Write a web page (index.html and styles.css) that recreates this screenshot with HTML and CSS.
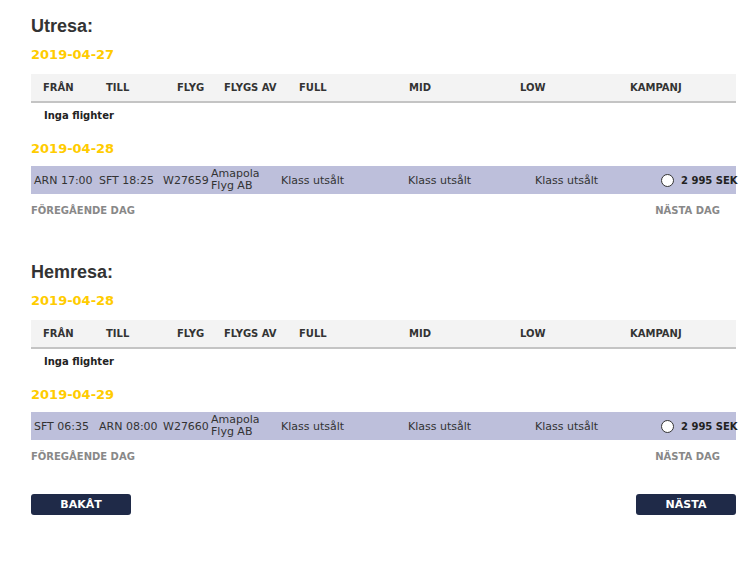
FILE: index.html
```html
<!DOCTYPE html>
<html lang="sv">
<head>
    <meta charset="UTF-8">
    <title>Välj flyg</title>
    <link rel="stylesheet" href="styles.css">
</head>
<body>
    <div class="booking">
        <div class="trip">
            <h2>Utresa:</h2>
            <div class="date">2019-04-27</div>
            <div class="head-row">
                <span>FRÅN</span><span>TILL</span><span>FLYG</span><span>FLYGS AV</span>
                <span>FULL</span><span>MID</span><span>LOW</span><span>KAMPANJ</span>
            </div>
            <div class="empty-row">Inga flighter</div>
            <div class="date date-next">2019-04-28</div>
            <div class="flight-row">
                <span>ARN 17:00</span><span>SFT 18:25</span><span>W27659</span>
                <span class="carrier">Amapola<br>Flyg AB</span>
                <span>Klass utsålt</span><span>Klass utsålt</span><span>Klass utsålt</span>
                <span class="fare"><i class="radio"></i><b>2 995 SEK</b></span>
            </div>
            <div class="day-nav">
                <a href="#">FÖREGÅENDE DAG</a>
                <a href="#">NÄSTA DAG</a>
            </div>
        </div>

        <div class="trip trip-return">
            <h2>Hemresa:</h2>
            <div class="date">2019-04-28</div>
            <div class="head-row">
                <span>FRÅN</span><span>TILL</span><span>FLYG</span><span>FLYGS AV</span>
                <span>FULL</span><span>MID</span><span>LOW</span><span>KAMPANJ</span>
            </div>
            <div class="empty-row">Inga flighter</div>
            <div class="date date-next">2019-04-29</div>
            <div class="flight-row">
                <span>SFT 06:35</span><span>ARN 08:00</span><span>W27660</span>
                <span class="carrier">Amapola<br>Flyg AB</span>
                <span>Klass utsålt</span><span>Klass utsålt</span><span>Klass utsålt</span>
                <span class="fare"><i class="radio"></i><b>2 995 SEK</b></span>
            </div>
            <div class="day-nav">
                <a href="#">FÖREGÅENDE DAG</a>
                <a href="#">NÄSTA DAG</a>
            </div>
        </div>

        <div class="steps">
            <button>BAKÅT</button>
            <button>NÄSTA</button>
        </div>
    </div>
</body>
</html>
```

FILE: styles.css
```css
body {
    margin: 0;
    padding: 0;
    background: #ffffff;
    font-family: 'DejaVu Sans', Verdana, sans-serif;
    color: #333;
}
.booking {
    width: 705px;
    padding: 15px 0 0 31px;
}
.trip h2 {
    margin: 0;
    font-family: 'Liberation Sans', Arial, sans-serif;
    font-size: 18px;
    line-height: 22px;
    font-weight: bold;
    color: #333;
}
.trip-return {
    margin-top: 43px;
}
.date {
    margin-top: 9px;
    font-size: 13px;
    line-height: 17px;
    font-weight: bold;
    color: #ffcc00;
}
.date.date-next {
    margin-top: 11px;
}
.head-row {
    margin-top: 11px;
    height: 27px;
    padding-left: 12px;
    display: grid;
    grid-template-columns: 63px 71px 47px 75px 110px 111px 110px 1fr;
    align-items: center;
    background: #f3f3f3;
    border-bottom: 2px solid #c4c4c4;
    font-size: 10px;
    font-weight: bold;
    color: #333;
}
.empty-row {
    height: 26px;
    line-height: 26px;
    padding-left: 13px;
    font-size: 10px;
    font-weight: bold;
    color: #222;
}
.flight-row {
    margin-top: 9px;
    height: 28px;
    padding-left: 3px;
    display: grid;
    grid-template-columns: 65px 64px 48px 70px 127px 127px 126px 1fr;
    align-items: center;
    background: #bdbfdb;
    font-size: 11px;
    color: #333;
}
.flight-row .carrier {
    line-height: 12px;
}
.fare {
    display: flex;
    align-items: center;
    gap: 7px;
    white-space: nowrap;
}
.fare b {
    font-size: 10px;
    color: #222;
}
.radio {
    flex-shrink: 0;
    width: 11px;
    height: 11px;
    border: 1px solid #333;
    border-radius: 50%;
    background: #fff;
}
.day-nav {
    margin-top: 10px;
    display: flex;
    justify-content: space-between;
    padding-right: 16px;
    line-height: 14px;
}
.day-nav a {
    font-size: 10px;
    font-weight: bold;
    color: #888;
    text-decoration: none;
}
.steps {
    margin-top: 30px;
    display: flex;
    justify-content: space-between;
}
.steps button {
    width: 100px;
    height: 21px;
    padding: 0;
    border: none;
    border-radius: 3px;
    background: #1f2a48;
    color: #fff;
    font-family: 'DejaVu Sans', Verdana, sans-serif;
    font-size: 11px;
    font-weight: bold;
    cursor: pointer;
}
```
